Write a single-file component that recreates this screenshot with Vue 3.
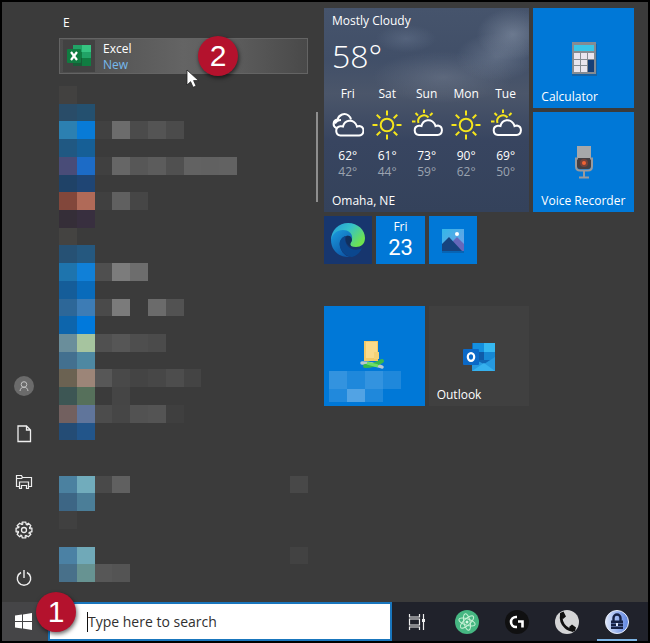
<script setup>
const mosaic = [
  ['#424140'],
  ['#294c68', '#24506f'],
  ['#2c80b1', '#087bd7', '#414141', '#6c6c6c', '#4b4b4b', '#545454', '#4b4b4b'],
  ['#205882', '#165f96'],
  ['#494c78', '#1c6bc6', '#404040', '#666666', '#575757', '#5c5c5c', '#505050', '#626262', '#616161', '#626262'],
  ['#1f4267', '#1f4574'],
  ['#82473b', '#b06a58', '#404040', '#606060', '#464646'],
  ['#352e38', '#382f3f'],
  ['#444341', '#3b3b3b'],
  ['#265174', '#25587f'],
  ['#1e74ad', '#1080d8', '#4f4f4f', '#7c7c7c', '#6d6d6d'],
  ['#155d99', '#096bbb'],
  ['#2d6798', '#3d7cb5', '#4a4a4a', '#7b7b7b', null, '#6b6b6b', '#525252'],
  ['#0d65ac', '#0079dc'],
  ['#6a8e9b', '#a6c49f', '#505050', '#565656', '#4e4e4e', '#4b4b4b'],
  ['#43708f', '#4e88a2'],
  ['#6b6252', '#9c8578', '#575757', '#494949', '#444444', '#474747', '#4d4d4d', '#444444'],
  ['#3d5654', '#56705b', null, '#454545'],
  ['#72605f', '#60759b', '#4c4c4c', '#464646', '#525252', '#545454', '#3f3f3f'],
  ['#244c75', '#22558a'],
  [],
  [],
  ['#4b81a0', '#71acbc', '#494949', '#606060', null, null, null, null, null, null, null, null, null, '#484848'],
  ['#3d6685', '#4b7e98'],
  ['#404040'],
  [],
  ['#4b81a4', '#70a9b8', null, null, null, null, null, null, null, null, null, null, null, '#424242'],
  ['#48708a', '#679392', '#575757', '#545454'],
]
const cells = mosaic.flatMap((row, y) => row.map((fill, x) => ({ x, y, fill }))).filter((c) => c.fill)

const forecast = [
  { day: 'Fri', icon: 'cloudy', high: 62, low: 42 },
  { day: 'Sat', icon: 'sun', high: 61, low: 44 },
  { day: 'Sun', icon: 'partly', high: 73, low: 59 },
  { day: 'Mon', icon: 'sun', high: 90, low: 62 },
  { day: 'Tue', icon: 'partly', high: 69, low: 50 },
]
const cloud = 'M8 26h18.500a4.800 4.800 0 0 0 .5-9.500q-1.500 0-2.500.5C23.500 13 20 10.800 16.500 11.300A7.500 7.500 0 0 0 10.500 17Q9 16.400 7.500 16.800A4.650 4.650 0 0 0 8 26z'
const turns = [0, 45, 90, 135, 180, 225, 270, 315]
</script>

<template>
  <div class="screen">
    <main class="start">
      <nav class="rail" aria-label="Start">
        <button class="rail-btn" aria-label="Account">
          <svg width="20" height="20" viewBox="0 0 20 20" fill="none">
            <circle cx="10" cy="10" r="10" fill="#6b6b6b" />
            <circle cx="10" cy="8.500" r="2.800" stroke="#c4c4c4" />
            <path d="M6 15c.3-2.500 1.800-3.800 4-3.800s3.700 1.300 4 3.800" stroke="#c4c4c4" />
          </svg>
        </button>
        <button class="rail-btn" aria-label="Documents">
          <svg width="20" height="20" viewBox="0 0 20 20" fill="none" stroke="#eee" stroke-width="1.300">
            <path d="M4 2h8.500l4 4v11.500H4zM12.500 2v4h4" />
          </svg>
        </button>
        <button class="rail-btn" aria-label="File Explorer">
          <svg width="20" height="20" viewBox="0 0 20 20" fill="none" stroke="#eee" stroke-width="1.200">
            <path d="M5.500 14.500h-3v-11h5l1 2h9v9h-3M2.500 6.500h5l1-1" />
            <path d="M5.500 16.500v-6.500h9v6.500h-2v-3h-5v3z" />
          </svg>
        </button>
        <button class="rail-btn" aria-label="Settings">
          <svg width="20" height="20" viewBox="0 0 20 20" fill="none" stroke="#eee" stroke-width="1.300">
            <circle cx="10" cy="10" r="2.500" />
            <path
              v-for="a in turns"
              :key="a"
              :transform="`rotate(${a} 10 10)`"
              d="M7.700 4.450L8.300 2.100h3.400l.6 2.350q.7 1 1.620.02"
            />
          </svg>
        </button>
        <button class="rail-btn" aria-label="Power">
          <svg width="20" height="20" viewBox="0 0 20 20" fill="none" stroke="#eee" stroke-width="1.400">
            <path d="M10 2v8M7 4.500a6.700 6.700 0 1 0 6 0" />
          </svg>
        </button>
      </nav>

      <section class="apps" aria-label="Apps">
        <h2 class="letter">E</h2>
        <button class="app">
          <span class="app-icon">
            <svg width="28" height="26" viewBox="0 0 28 26">
              <path d="M8 2h9v7H8z" fill="#21a366" /><path d="M17 2h9v7h-9z" fill="#36c481" />
              <path d="M8 9h9v6H8z" fill="#107c41" /><path d="M17 9h9v6h-9z" fill="#21a366" />
              <path d="M8 15h9v8H8z" fill="#185c37" /><path d="M17 15h9v8h-9z" fill="#107c41" />
              <rect x="2" y="6" width="14" height="14" rx="1" fill="#107c41" />
              <path d="M6 9l6 8M12 9l-6 8" stroke="#fff" stroke-width="2.200" />
            </svg>
          </span>
          <span class="app-text"><span>Excel</span><span class="new">New</span></span>
        </button>
        <svg class="mosaic" viewBox="0 0 14 28" preserveAspectRatio="none" shape-rendering="crispEdges" aria-hidden="true">
          <rect v-for="c in cells" :key="`${c.x}-${c.y}`" :x="c.x" :y="c.y" width="1" height="1" :fill="c.fill" />
        </svg>
        <span class="badge badge-two">2</span>
        <svg class="cursor" width="14" height="20" viewBox="0 0 14 20">
          <path d="M1 1v15l3.600-3.300 2.500 5.600 3-1.300-2.500-5.400h5z" fill="#fff" stroke="#222" stroke-width=".8" />
        </svg>
        <span class="scrollbar"></span>
      </section>

      <section class="tiles" aria-label="Tiles">
        <div class="group">
          <a href="#" class="tile weather">
            <span class="condition">Mostly Cloudy</span>
            <span class="temp">58°</span>
            <span class="forecast">
              <span v-for="d in forecast" :key="d.day" class="day">
                <span>{{ d.day }}</span>
                <svg class="sky" width="32" height="32" viewBox="0 0 32 32" fill="none" stroke-width="2">
                  <g v-if="d.icon === 'sun'" stroke="#f5e51b">
                    <circle cx="16" cy="16" r="6.300" />
                    <path v-for="a in turns" :key="a" d="M16 1.500v5" :transform="`rotate(${a} 16 16)`" />
                  </g>
                  <g v-else-if="d.icon === 'partly'">
                    <g stroke="#f5e51b">
                      <path d="M7.500 14a5.800 5.800 0 0 1 10-5.500" />
                      <path v-for="a in [-90, -45, 0, 45]" :key="a" d="M13 .5v3.500" :transform="`rotate(${a} 13 12.500)`" />
                    </g>
                    <path :d="cloud" stroke="#fff" />
                  </g>
                  <g v-else stroke="#fff">
                    <path d="M4.500 19A4.400 4.400 0 0 1 5.500 10.500C7 5.500 12.500 3.500 16.500 6.500q2 1.500 2.500 4M3 14.500q2-3.500 6-3.500" />
                    <path :d="cloud" transform="translate(.5 .500)" />
                  </g>
                </svg>
                <span>{{ d.high }}°</span>
                <span class="low">{{ d.low }}°</span>
              </span>
            </span>
            <span class="place">Omaha, NE</span>
          </a>
          <a href="#" class="tile medium">
            <svg class="glyph" width="36" height="40" viewBox="0 0 36 40">
              <rect x="6" y="4" width="25" height="32" fill="#274d78" opacity=".5" />
              <rect x="6" y="2" width="24" height="32" fill="#858b92" />
              <rect x="8" y="5" width="20" height="6" fill="#39c5e8" />
              <path d="M8 13h6v6H8zM15 13h6v6h-6zM22 13h6v6h-6zM8 20h6v5H8zM15 20h6v5h-6zM8 26h6v6H8zM15 26h6v6h-6z" fill="#e9e5ee" />
              <path d="M22 20h6v12h-6z" fill="#173f76" />
            </svg>
            <span class="label">Calculator</span>
          </a>
          <a href="#" class="tile medium">
            <svg class="glyph" width="36" height="40" viewBox="0 0 36 40">
              <path d="M11 2h14v13H11z" fill="#a6a8aa" />
              <path d="M11 14h14v8q0 3-3 3h-8q-3 0-3-3z" fill="#443f43" />
              <circle cx="18" cy="19" r="4" fill="#75433b" /><circle cx="18" cy="19" r="2" fill="#f26435" />
              <path d="M12 14.500h-2v8q0 4 4 4h8q4 0 4-4v-8h-2M18 27v6M13 33.500h10" fill="none" stroke="#989a9d" stroke-width="2" />
            </svg>
            <span class="label">Voice Recorder</span>
          </a>
          <a href="#" class="tile small edge" aria-label="Edge">
            <svg width="38" height="38" viewBox="0 0 38 38">
              <defs>
                <linearGradient id="edgeTop" x1="0" y1="0" x2="1" y2=".6">
                  <stop offset="0" stop-color="#2298dc" /><stop offset=".5" stop-color="#35c1c9" /><stop offset="1" stop-color="#6ee34e" />
                </linearGradient>
                <linearGradient id="edgeLow" x1="0" y1="0" x2=".6" y2="1">
                  <stop offset="0" stop-color="#1b9de0" /><stop offset="1" stop-color="#0d58a8" />
                </linearGradient>
              </defs>
              <path d="M2 19C2 9 10 2 19 2c10 0 17 7 17 15 0 6-4 9-9 9-4 0-6-1-6-3 0-1 2-2 2-4 0-3-3-6-7-6C9 13 4 18 2 19z" fill="url(#edgeTop)" />
              <path d="M2 19c1-6 6-10 12-10 6 0 10 4 9 9-1-3-4-4-6-3-4 1-7 5-6 10 1 6 5 10 10 11C10 37 2 29 2 19z" fill="url(#edgeLow)" />
              <path d="M16 15c-6 3-7 9-3 15 3 4 7 6 10 6 4-1 8-4 10-9-5 3-12 2-15-3-2-3-2-6-2-9z" fill="#0b478e" />
              <path d="M18 15c4-1 6 3 4 6-1 2-1 4 1 5-5-1-8-7-5-11z" fill="#10305e" />
            </svg>
          </a>
          <a href="#" class="tile small calendar"><span>Fri</span><span class="date">23</span></a>
          <a href="#" class="tile small" aria-label="Photos">
            <svg width="28" height="28" viewBox="0 0 28 28">
              <defs>
                <linearGradient id="photoSky" x2="1" y2="1"><stop stop-color="#32b7e9" /><stop offset="1" stop-color="#759ee5" /></linearGradient>
              </defs>
              <rect x="3" y="5" width="22" height="22" fill="#0b579c" opacity=".6" />
              <rect x="3" y="3" width="22" height="22" fill="url(#photoSky)" />
              <path d="M14 15l4-4 7 7v7H14z" fill="#6668bb" />
              <path d="M3 18l7-7 13 14H3z" fill="#17437f" />
              <circle cx="18" cy="8" r="2" fill="#fff" />
            </svg>
          </a>
        </div>
        <div class="group">
          <a href="#" class="tile medium" aria-label="Folder">
            <svg class="glyph" width="36" height="40" viewBox="0 0 36 40">
              <path d="M8 3h14v20H8z" fill="#f4ca68" /><path d="M10 4h11v16H10z" fill="#fbdb8b" /><path d="M18 14h5v7h-5z" fill="#f5d278" />
              <path d="M6 25q10 0 20 4" fill="none" stroke="#b9c7ce" stroke-width="3.500" stroke-linecap="round" />
              <path d="M9 28q9 0 17-5" fill="none" stroke="#37b94b" stroke-width="4" stroke-linecap="round" />
              <path d="M11 25l11 3" stroke="#6ddf64" stroke-width="3" />
            </svg>
            <svg class="veil" viewBox="0 0 72 31" preserveAspectRatio="none" fill="#fff" shape-rendering="crispEdges" aria-hidden="true">
              <path d="M0 0h18v18H0zM36 0h18v18H36z" opacity=".2" /><path d="M18 0h18v18H18zM54 0h18v18H54zM36 18h18v13H36z" opacity=".12" />
              <path d="M0 18h18v13H0z" opacity=".13" /><path d="M18 18h18v13H18z" opacity=".32" />
            </svg>
          </a>
          <a href="#" class="tile medium outlook">
            <svg class="glyph" width="36" height="40" viewBox="0 0 36 40">
              <path d="M11 5h23v28H11z" fill="#1066b5" />
              <path d="M12 5h11v9H12z" fill="#1490df" /><path d="M23 5h11v9H23z" fill="#35b8f1" />
              <path d="M12 14h11v8H12z" fill="#0f5ba8" /><path d="M23 14h11v8H23z" fill="#1688d4" />
              <path d="M11 33V20l12 6 11-7v14z" fill="#2699df" /><path d="M11 33l12-8 11 8z" fill="#36b1ee" />
              <rect x="2" y="11" width="16" height="16" rx="1" fill="#0b69c7" />
              <ellipse cx="10" cy="19" rx="3.200" ry="3.800" fill="none" stroke="#fff" stroke-width="2.200" />
            </svg>
            <span class="label">Outlook</span>
          </a>
        </div>
      </section>
    </main>

    <footer class="taskbar">
      <button class="windows" aria-label="Start">
        <svg width="17" height="17" viewBox="0 0 17 17" fill="#fff">
          <path d="M0 2.500l7-1V8H0zM8 1.400L17 0v8H8zM0 9h7v6.500l-7-1zM8 9h9v8l-9-1.400z" />
        </svg>
      </button>
      <label class="search">
        <span class="caret"></span>
        <input type="text" placeholder="Type here to search" aria-label="Search" />
      </label>
      <nav class="pins" aria-label="Taskbar">
        <button class="pin" aria-label="Task View">
          <svg width="18" height="18" viewBox="0 0 18 18" fill="none" stroke="#eee" stroke-width="1.200">
            <path d="M1.500 1v3h10V1M1.500 17v-3h10v3M1.500 6h10v6h-10zM15.500 1v16" /><path d="M14 6h3v3h-3z" fill="#eee" stroke="none" />
          </svg>
        </button>
        <button class="pin" aria-label="Atom">
          <svg width="26" height="26" viewBox="0 0 26 26" fill="none">
            <circle cx="13" cy="13" r="12" fill="#46b782" />
            <g stroke="#c7f1d5">
              <ellipse cx="13" cy="13" rx="3.200" ry="8.500" transform="rotate(-12 13 13)" />
              <ellipse cx="13" cy="13" rx="3.200" ry="8.500" transform="rotate(48 13 13)" />
              <ellipse cx="13" cy="13" rx="3.200" ry="8.500" transform="rotate(108 13 13)" />
            </g>
            <circle cx="13" cy="13" r="1.500" fill="#d8f8e2" />
          </svg>
        </button>
        <button class="pin" aria-label="G Hub">
          <svg width="26" height="26" viewBox="0 0 26 26" fill="none">
            <circle cx="13" cy="13" r="12" fill="#101011" />
            <path d="M13 8h-1a5 5 0 0 0 0 10h1M14 12.500h4.500v6" stroke="#fff" stroke-width="2.600" />
          </svg>
        </button>
        <button class="pin" aria-label="Phone">
          <svg width="26" height="26" viewBox="0 0 26 26" fill="none">
            <circle cx="13" cy="13" r="12" fill="#d4d5d6" />
            <path d="M7.500 5q-1.500 8 4 13 3 3 7 3" stroke="#101010" stroke-width="2.800" />
            <path d="M6 4l3.500-1.500 2.500 5-3 2.500-3-2zM15 18l3-2.500 4 3-1 3.500-3 1z" fill="#101010" />
          </svg>
        </button>
        <button class="pin active" aria-label="KeePass">
          <svg width="26" height="26" viewBox="0 0 26 26" fill="none">
            <defs><linearGradient id="lockBg" x2="1"><stop stop-color="#dce6fb" /><stop offset="1" stop-color="#5b83e2" /></linearGradient></defs>
            <circle cx="13" cy="13" r="11.500" fill="url(#lockBg)" stroke="#e8edf8" />
            <path d="M9.500 12V9a3.500 3.500 0 0 1 7 0v3" stroke="#152044" stroke-width="2.400" />
            <rect x="7" y="11.500" width="12" height="8.500" fill="#152044" />
            <path d="M7 14.500h12M7 17.500h12" stroke="#6d84bc" stroke-width=".7" /><path d="M12 14h2v3h-2z" fill="#dce6fb" />
          </svg>
        </button>
      </nav>
      <span class="badge badge-one">1</span>
    </footer>
  </div>
</template>

<style>
body {
  margin: 0;
  background: #000;
}
</style>

<style scoped>
.screen {
  box-sizing: border-box;
  min-height: 100vh;
  padding: 2px;
  display: flex;
  flex-direction: column;
  background: #000;
  color: #fff;
  font: 12px/16px "Open Sans", "Noto Sans", sans-serif;
}
button {
  border: 0;
  padding: 0;
  background: none;
  color: inherit;
  font: inherit;
}
a {
  color: inherit;
  text-decoration: none;
}
svg {
  display: block;
}
.start {
  flex: 1;
  display: grid;
  grid-template-columns: 44px 276px minmax(0, 1fr);
  background: #3b3b3b;
}
.rail {
  display: flex;
  flex-direction: column;
  justify-content: flex-end;
}
.rail-btn {
  height: 48px;
  display: grid;
  place-items: center;
}
.apps {
  position: relative;
  padding: 13px 14px 20px 13px;
}
.letter {
  margin: 0 0 7px;
  padding-left: 4px;
  font: inherit;
}
.app {
  box-sizing: border-box;
  width: 100%;
  height: 36px;
  display: flex;
  align-items: center;
  gap: 8px;
  padding: 0 3px;
  border: 1px solid #646464;
  background: linear-gradient(90deg, #4c4c4c, #646464 50%, #5d5d5d 70%, #494949);
  text-align: left;
}
.app-icon {
  width: 32px;
  height: 32px;
  display: grid;
  place-items: center;
  background: #424242;
}
.app-text {
  display: flex;
  flex-direction: column;
  padding-top: 2px;
}
.new {
  color: #76b9ed;
}
.mosaic {
  width: 100%;
  height: 496px;
  margin-top: 12px;
}
.badge {
  position: absolute;
  width: 40px;
  height: 40px;
  border-radius: 50%;
  background: #b4122d;
  box-shadow: 1px 2px 4px rgba(0, 0, 0, 0.6);
  font: 30px/40px "Liberation Sans", Arial, sans-serif;
  text-align: center;
}
.badge-two {
  left: 152px;
  top: 34px;
}
.badge-one {
  left: 34px;
  top: -10px;
}
.cursor {
  position: absolute;
  left: 140px;
  top: 67px;
}
.scrollbar {
  position: absolute;
  right: 4px;
  top: 110px;
  width: 2px;
  height: 90px;
  background: #8e8e8e;
}
.tiles {
  padding: 6px 14px 20px 2px;
  display: flex;
  flex-direction: column;
  gap: 42px;
}
.group {
  display: grid;
  grid-template-columns: repeat(6, minmax(0, 1fr));
  grid-auto-rows: 48px;
  gap: 4px;
}
.tile {
  position: relative;
  display: grid;
  place-items: center;
  background: #0078d7;
}
.medium {
  grid-column: span 2;
  grid-row: span 2;
  padding-top: 4px;
}
.weather {
  grid-column: span 4;
  grid-row: span 4;
  display: flex;
  flex-direction: column;
  align-items: stretch;
  padding: 5px 8px 3px;
  background:
    radial-gradient(ellipse 36px 26px at 92% 13%, rgba(135, 148, 168, 0.6), transparent),
    radial-gradient(ellipse 40px 24px at 84% 24%, rgba(125, 138, 158, 0.5), transparent),
    radial-gradient(ellipse 70px 26px at 58% 34%, rgba(120, 130, 148, 0.45), transparent),
    radial-gradient(ellipse 30px 14px at 40% 15%, rgba(110, 125, 150, 0.4), transparent),
    linear-gradient(#46546c, #414f68 25%, #4b566a 42%, #384560 65%, #34425b);
}
.temp {
  margin: 11px 0 14px;
  font-size: 32px;
  line-height: 32px;
  font-weight: 300;
}
.forecast {
  display: grid;
  grid-template-columns: repeat(5, 1fr);
  margin: 0 -4px;
}
.day {
  display: flex;
  flex-direction: column;
  align-items: center;
}
.sky {
  margin: 7px 0;
}
.low {
  color: #9ba3b0;
}
.place {
  margin-top: auto;
}
.label {
  position: absolute;
  left: 8px;
  bottom: 3px;
  white-space: nowrap;
}
.edge {
  background: #17366e;
}
.calendar {
  align-content: center;
}
.date {
  font: 22px/26px Roboto, "Open Sans", sans-serif;
}
.veil {
  position: absolute;
  left: 5px;
  bottom: 4px;
  width: 72px;
  height: 31px;
}
.outlook {
  background: #404040;
}
.taskbar {
  position: relative;
  height: 39px;
  display: flex;
  background: #20222b;
}
.windows {
  width: 46px;
  display: grid;
  place-items: center;
  padding-right: 4px;
  background: #454547;
}
.search {
  box-sizing: border-box;
  flex: 1;
  display: flex;
  align-items: center;
  border: 2px solid #1976bd;
  padding-left: 37px;
  background: #fff;
}
.caret {
  width: 1px;
  height: 20px;
  background: #111;
}
.search input {
  flex: 1;
  min-width: 0;
  border: 0;
  padding: 0;
  outline: 0;
  background: none;
  font: 14px/20px "Open Sans", "Noto Sans", sans-serif;
}
.search input::placeholder {
  color: #303030;
  opacity: 1;
}
.pins {
  display: flex;
  padding-right: 6px;
}
.pin {
  width: 50px;
  display: grid;
  place-items: center;
}
.active {
  background: linear-gradient(#7db5e6, #7db5e6) center bottom / 40px 2px no-repeat;
}
</style>
